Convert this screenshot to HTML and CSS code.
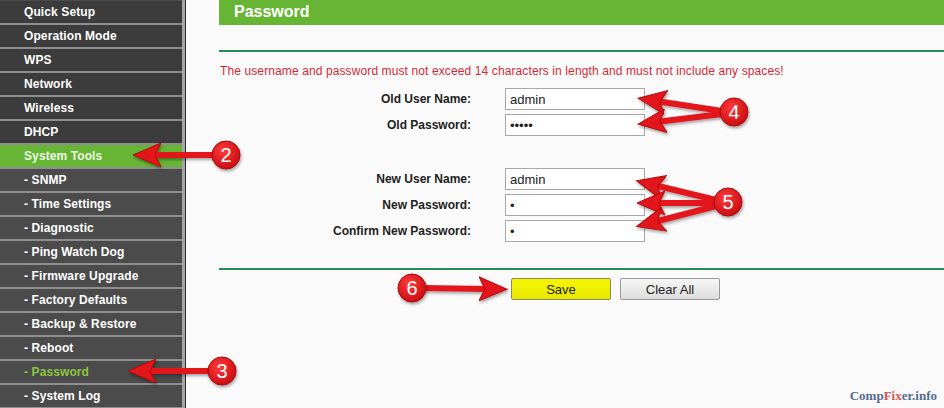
FILE: index.html
```html
<!DOCTYPE html>
<html lang="en">
<head>
    <meta charset="UTF-8" />
    <title>Password - System Tools</title>
    <link rel="stylesheet" href="styles.css">
</head>
<body>
<div class="page">
    <nav class="menu">
        <a class="item">Quick Setup</a>
        <a class="item">Operation Mode</a>
        <a class="item">WPS</a>
        <a class="item">Network</a>
        <a class="item">Wireless</a>
        <a class="item">DHCP</a>
        <a class="item active">System Tools</a>
        <a class="item sub">- SNMP</a>
        <a class="item sub">- Time Settings</a>
        <a class="item sub">- Diagnostic</a>
        <a class="item sub">- Ping Watch Dog</a>
        <a class="item sub">- Firmware Upgrade</a>
        <a class="item sub">- Factory Defaults</a>
        <a class="item sub">- Backup &amp; Restore</a>
        <a class="item sub">- Reboot</a>
        <a class="item sub current">- Password</a>
        <a class="item sub">- System Log</a>
    </nav>

    <main class="content">
        <div class="titulo">Password</div>
        <div class="regua"></div>
        <p class="aviso">The username and password must not exceed 14 characters in length and must not include any spaces!</p>

        <div class="form">
            <label>Old User Name:</label>
            <input type="text" value="admin">
            <label>Old Password:</label>
            <input type="password" value="admin">
        </div>

        <div class="form novo">
            <label>New User Name:</label>
            <input type="text" value="admin">
            <label>New Password:</label>
            <input type="password" value="a">
            <label>Confirm New Password:</label>
            <input type="password" value="a">
        </div>

        <div class="regua baixo"></div>

        <div class="botoes">
            <button class="btn-salvar">Save</button>
            <button class="btn-limpar">Clear All</button>
        </div>
    </main>

    <!-- setas e números da captura -->
    <svg class="marcas" width="944" height="408" viewBox="0 0 944 408">
        <defs>
            <marker id="ponta" markerUnits="userSpaceOnUse" markerWidth="30" markerHeight="26"
                    refX="10" refY="13" orient="auto">
                <path d="M0,1 L28,13 L0,25 L6,13 Z" fill="#e3141c" stroke="#b00a10" stroke-width="1"/>
            </marker>
            <radialGradient id="bola" cx="40%" cy="35%" r="70%">
                <stop offset="0" stop-color="#ff3b3b"/>
                <stop offset="1" stop-color="#c70a0f"/>
            </radialGradient>
            <filter id="sombra" x="-20%" y="-20%" width="140%" height="160%">
                <feDropShadow dx="1" dy="2" stdDeviation="1.5" flood-color="#000" flood-opacity="0.35"/>
            </filter>
        </defs>
        <g filter="url(#sombra)" stroke="#e3141c" stroke-width="6" marker-end="url(#ponta)">
            <line x1="215" y1="155" x2="151" y2="155"/>
            <line x1="212" y1="371" x2="146" y2="371"/>
            <line x1="722" y1="111" x2="656" y2="101"/>
            <line x1="722" y1="114" x2="656" y2="122"/>
            <line x1="716" y1="200" x2="654" y2="185"/>
            <line x1="716" y1="203" x2="655" y2="203"/>
            <line x1="716" y1="206" x2="654" y2="222"/>
            <line x1="422" y1="288" x2="489" y2="289"/>
        </g>
        <g filter="url(#sombra)" fill="url(#bola)" stroke="#a8080c" stroke-width="1">
            <circle cx="226" cy="155" r="14"/>
            <circle cx="222" cy="371" r="14"/>
            <circle cx="734" cy="112" r="14"/>
            <circle cx="728" cy="202" r="14"/>
            <circle cx="412" cy="288" r="14"/>
        </g>
        <g class="numeros" fill="#fff" text-anchor="middle">
            <text x="226" y="162">2</text>
            <text x="222" y="378">3</text>
            <text x="734" y="119">4</text>
            <text x="728" y="209">5</text>
            <text x="412" y="295">6</text>
        </g>
    </svg>

    <div class="marca">Comp<span>Fix</span>er.info</div>
</div>
</body>
</html>
```

FILE: styles.css
```css
:root {
    --verde: #66b534;
    --verde-linha: #2f8a5a;
    --menu-escuro: #3c3c3c;
    --menu-sub: #4b4b4b;
    --menu-borda: #8f8f8f;
    --fundo: #fafafa;
    --vermelho: #d42a38;
}

html, body {
    margin: 0;
    height: 100%;
    overflow: hidden;
    background: var(--fundo);
    font-family: "Liberation Sans", Arial, sans-serif;
}

.page {
    position: relative;
    display: flex;
    width: 944px;
    height: 408px;
}

.menu {
    width: 182px;
    flex-shrink: 0;
    display: flex;
    flex-direction: column;
    padding-top: 1px;
    background: var(--menu-sub);
    border-right: 3px solid #a6a6a6;
}

.item {
    display: block;
    flex-shrink: 0;
    height: 22px;
    line-height: 22px;
    padding-left: 24px;
    border-bottom: 2px solid var(--menu-borda);
    background: var(--menu-escuro);
    color: #fff;
    font-size: 12px;
    font-weight: bold;
    letter-spacing: 0.1px;
    white-space: nowrap;
}

.item.sub {
    background: var(--menu-sub);
}

.item.active {
    background: var(--verde);
    color: #eef8e4;
}

.item.current {
    color: #8dc641;
}

.content {
    flex: 1;
    border-left: 1px solid #2a2a2a;
    padding-left: 33px;
    background: var(--fundo);
}

.titulo {
    height: 25px;
    line-height: 24px;
    padding-left: 15px;
    background: var(--verde);
    color: #fff;
    font-size: 16px;
    font-weight: bold;
}

.regua {
    height: 2px;
    margin-top: 25px;
    background: var(--verde-linha);
}

.regua.baixo {
    margin-top: 26px;
}

.aviso {
    margin: 12px 0 0 1px;
    line-height: 14px;
    font-size: 12px;
    letter-spacing: 0.11px;
    color: var(--vermelho);
    white-space: nowrap;
}

.form {
    display: grid;
    grid-template-columns: 252px 140px;
    column-gap: 34px;
    row-gap: 4px;
    margin-top: 10px;
}

.form.novo {
    margin-top: 32px;
}

.form label {
    text-align: right;
    font-size: 12px;
    font-weight: bold;
    line-height: 22px;
    color: #222;
}

.form input {
    box-sizing: border-box;
    width: 140px;
    height: 22px;
    margin: 0;
    padding: 0 4px;
    border: 1px solid #a8a8a8;
    background: #fff;
    font-family: "Liberation Sans", Arial, sans-serif;
    font-size: 13px;
    color: #222;
    outline: none;
}

.botoes {
    display: flex;
    gap: 9px;
    padding-left: 292px;
    margin-top: 8px;
}

.botoes button {
    box-sizing: border-box;
    width: 100px;
    height: 22px;
    padding: 0;
    border-radius: 2px;
    font-family: "Liberation Sans", Arial, sans-serif;
    font-size: 13px;
    color: #222;
    cursor: pointer;
}

.btn-salvar {
    border: 1px solid #8c8c5a;
    background: linear-gradient(#f5f500, #e8e800);
}

.btn-limpar {
    border: 1px solid #9a9a9a;
    background: linear-gradient(#f6f6f6, #dcdcdc);
}

.marcas {
    position: absolute;
    left: 0;
    top: 0;
    pointer-events: none;
}

.numeros {
    font-family: "Liberation Sans", Arial, sans-serif;
    font-size: 20px;
}

.marca {
    position: absolute;
    right: 7px;
    bottom: 4px;
    font-family: "Liberation Serif", "Times New Roman", serif;
    font-size: 13px;
    font-weight: bold;
    color: #566b8f;
}

.marca span {
    color: #d9534f;
}
```
